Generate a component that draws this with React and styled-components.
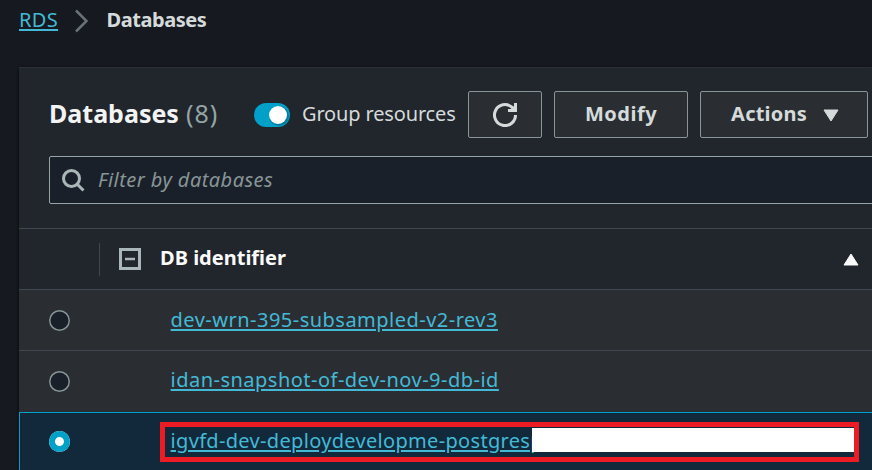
import React from "react";
import styled, { createGlobalStyle } from "styled-components";

const Global = createGlobalStyle`
  * { box-sizing: border-box; }
  body { margin: 0; background: #16191f; overflow: hidden; font-family: "Noto Sans", "Open Sans", sans-serif; font-size: 20px; color: #d5dbdb; }
`;

const Page = styled.div`
  width: 872px;
  height: 470px;
  overflow: hidden;
  display: flex;
  flex-direction: column;
  background: #16191f;
`;

const Breadcrumbs = styled.nav`
  height: 67px;
  padding: 5px 0 0 19px;
  display: flex;
  align-items: flex-start;
  line-height: 30px;
  svg { margin: 4px 16.5px 0 16px; }
`;

const Text = styled.span`
  display: block;
  flex: none;
  white-space: nowrap;
  font-size: ${(p) => p.$size || 20}px;
  font-weight: ${(p) => p.$weight || 400};
  letter-spacing: ${(p) => p.$track || 0}px;
  color: ${(p) => p.$color || "#d5dbdb"};
`;

const Link = styled.a`
  color: #44b9d6;
  white-space: nowrap;
  text-decoration: underline;
  text-decoration-thickness: 2px;
  text-underline-offset: 2px;
  letter-spacing: ${(p) => p.$track || 0}px;
`;

const Panel = styled.main`
  flex: none;
  height: 403px;
  margin-left: 19px;
  background: #21252c;
  border-top: 1px solid #2c3035;
  box-shadow: 0 1px 3px rgba(0, 0, 0, 0.8);
`;

const Toolbar = styled.header`
  height: 70px;
  padding: 23px 4px 0 30px;
  display: flex;
  line-height: 46px;
`;

const Title = styled.h1`
  flex: none;
  margin: 0;
  width: 205px;
  display: flex;
  gap: 7px;
  font-size: 25px;
  line-height: 44px;
`;

const Toggle = styled.span`
  flex: none;
  width: 36px;
  height: 24px;
  margin: 12px 12px 0 0;
  padding: 3px;
  border-radius: 12px;
  background: #00a1c9;
  display: flex;
  justify-content: flex-end;
  &::after { content: ""; width: 18px; height: 18px; border-radius: 50%; background: #fff; box-shadow: 1px 1px 0 1px rgba(0, 60, 90, 0.35); }
`;

const ToggleLabel = styled.div`
  flex: none;
  width: 166px;
`;

const Button = styled.button`
  flex: none;
  width: ${(p) => p.$width}px;
  height: 47px;
  margin-right: 12px;
  padding: 0 0 ${(p) => (p.$icon ? 0 : 2)}px;
  display: flex;
  align-items: center;
  justify-content: center;
  gap: 16px;
  border: 1px solid #879596;
  border-radius: 2px;
  background: #2a2e33;
  font-family: inherit;
  &:last-child { margin-right: 0; padding-left: 2px; }
`;

const Caret = styled.svg`
  margin-top: 3px;
`;

const Search = styled.div`
  height: 48px;
  margin: 18px -4px 0 30px;
  padding: 0 12px;
  display: flex;
  gap: 12px;
  border: 1px solid #95a5a6;
  border-radius: 2px;
  background: #1a2029;
  line-height: 45px;
  font-style: italic;
  svg { margin-top: 12px; flex: none; }
`;

const HeadRow = styled.div`
  height: 62px;
  margin-top: 24px;
  padding: 0 13px 0 80px;
  display: flex;
  border-top: 1px solid #414750;
  border-bottom: 1px solid #414750;
  line-height: 58px;
`;

const Divider = styled.i`
  width: 1px;
  height: 33px;
  margin: 14px 19px 0 0;
  background: #414750;
`;

const Collapse = styled.svg`
  margin: 19px 19px 0 0;
  flex: none;
`;

const Sort = styled.svg`
  margin: 24px 0 0 auto;
`;

const Row = styled.div`
  height: ${(p) => (p.$selected ? 70 : 61)}px;
  padding-left: ${(p) => (p.$selected ? 29 : 30)}px;
  display: flex;
  background: ${(p) => (p.$selected ? "#12293b" : "#2a2e33")};
  border-bottom: 1px solid #414750;
  ${(p) => p.$selected && "border: 1px solid #00a1c9; border-width: 1px 0 0 1px;"}
  ${(p) => p.$last && "border-bottom-color: #2a2e33;"}
  line-height: ${(p) => (p.$last ? 58 : 60)}px;
`;

const Radio = styled.span`
  flex: none;
  width: 21px;
  height: 21px;
  margin: ${(p) => (p.$checked ? "18px 100px 0 0" : "20px 100.6px 0 0")};
  border-radius: 50%;
  box-shadow: inset 0 0 0 ${(p) => (p.$checked ? "6px #00a1c9" : "1.5px #879596")};
  background: ${(p) => (p.$checked ? "#fff" : "#1a2029")};
`;

const Highlight = styled.div`
  position: relative;
  width: 699px;
  height: 40px;
  margin: 9px 0 0 -10px;
  padding-left: 5.6px;
  border: 5px solid #ed1c24;
  line-height: 28px;
`;

const Redaction = styled.span`
  position: absolute;
  left: 367px;
  top: 1px;
  width: 322px;
  height: 24px;
  background: #fff;
`;

export default function App() {
  return (
    <Page>
      <Global />
      <Breadcrumbs>
        <Link href="#" $track={0.35}>RDS</Link>
        <svg width="16" height="24" viewBox="0 0 16 24" fill="none" stroke="#687078" strokeWidth="2.5">
          <path d="M2 1.5 L12.5 12 L2 22.5" />
        </svg>
        <Text $weight={700} $track={-0.45}>Databases</Text>
      </Breadcrumbs>
      <Panel>
        <Toolbar>
          <Title>
            <Text $size={25} $weight={700} $color="#f2f3f3">Databases</Text>
            <Text $size={25} $track={1} $color="#95a5a6">(8)</Text>
          </Title>
          <Toggle />
          <ToggleLabel><Text $track={-0.15}>Group resources</Text></ToggleLabel>
          <Button $width={74} $icon aria-label="Refresh">
            <svg width="24" height="24" viewBox="0 0 24 24" fill="none" stroke="#d5dbdb" strokeWidth="3">
              <path d="M22.5 12A10.5 10.5 0 1 1 18.6 3.9L21 6.5" />
              <path d="M21 0H24V9H15V6H18L21 3Z" fill="#d5dbdb" stroke="none" />
            </svg>
          </Button>
          <Button $width={134}><Text $weight={700} $track={0.5}>Modify</Text></Button>
          <Button $width={168}>
            <Text $weight={700} $track={0.2}>Actions</Text>
            <Caret width="16" height="13" viewBox="0 0 16 13"><path d="M1 1H15L8 12Z" fill="#d5dbdb" stroke="#d5dbdb" strokeLinejoin="round" /></Caret>
          </Button>
        </Toolbar>
        <Search>
          <svg width="24" height="24" viewBox="0 0 24 24" fill="none" stroke="#aab7b8" strokeWidth="3">
            <circle cx="9.5" cy="9.5" r="8" /><path d="M15 15L21.5 21.5" />
          </svg>
          <Text $color="#879596" $track={0.45}>Filter by databases</Text>
        </Search>
        <HeadRow>
          <Divider />
          <Collapse width="22" height="22" viewBox="0 0 22 22" fill="none" stroke="#aab7b8">
            <rect x="1.5" y="1.5" width="19" height="19" strokeWidth="3" /><path d="M6 11H16" strokeWidth="2.5" />
          </Collapse>
          <Text $weight={700} $color="#fafafa">DB identifier</Text>
          <Sort width="16" height="13" viewBox="0 0 16 13"><path d="M1 12H15L8 1Z" fill="#fafafa" stroke="#fafafa" strokeLinejoin="round" /></Sort>
        </HeadRow>
        <Row><Radio /><Link href="#" $track={0.48}>dev-wrn-395-subsampled-v2-rev3</Link></Row>
        <Row $last><Radio /><Link href="#" $track={0.48}>idan-snapshot-of-dev-nov-9-db-id</Link></Row>
        <Row $selected>
          <Radio $checked />
          <Highlight><Link href="#" $track={0.32}>igvfd-dev-deploydevelopme-postgresp</Link><Redaction /></Highlight>
        </Row>
      </Panel>
    </Page>
  );
}
